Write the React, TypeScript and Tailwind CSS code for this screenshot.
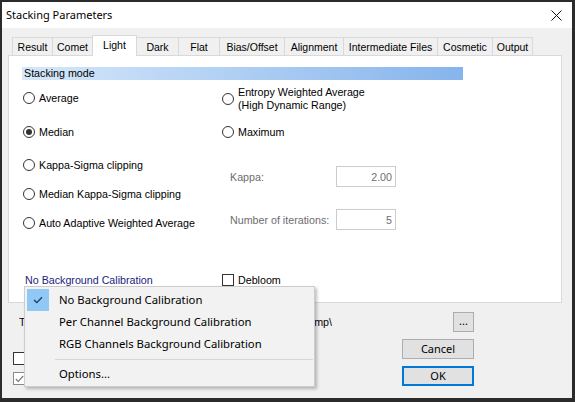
import React from "react";

const ui = "font-['Liberation_Sans',Arial,sans-serif] text-[10.7px] leading-[14px] text-black";
const seg = "font-['Noto_Sans',sans-serif]";

function Radio({ checked, label }: { checked?: boolean; label: React.ReactNode }) {
  return (
    <div className="flex items-center gap-[4px] h-[14px]">
      <span className="w-[12px] h-[12px] rounded-full border border-[#333333] bg-white flex items-center justify-center shrink-0">
        {checked && <span className="w-[6px] h-[6px] rounded-full bg-[#333333]" />}
      </span>
      <span>{label}</span>
    </div>
  );
}

const tabs: { name: string; cls: string }[] = [
  { name: "Result", cls: "w-[40px] border-l" },
  { name: "Comet", cls: "w-[40px] border-l" },
  { name: "Light", cls: "w-[45px] border-l border-r" },
  { name: "Dark", cls: "w-[41px]" },
  { name: "Flat", cls: "w-[41px] border-l" },
  { name: "Bias/Offset", cls: "w-[65px] border-l" },
  { name: "Alignment", cls: "w-[59px] border-l" },
  { name: "Intermediate Files", cls: "w-[94px] border-l" },
  { name: "Cosmetic", cls: "w-[55px] border-l" },
  { name: "Output", cls: "w-[41px] border-l border-r" },
];

export default function App() {
  return (
    <div className="w-[575px] h-[402px] bg-[#2b2b2b] pt-[2px] pl-[2px] overflow-hidden">
      <div className={`w-[570px] h-[396px] bg-[#f0f0f0] flex flex-col ${ui}`}>
        {/* Title bar */}
        <div className="h-[26px] bg-white flex items-center justify-between pl-[4px] pr-[10px] shrink-0">
          <span className={`${seg} text-[11px] text-black`}>Stacking Parameters</span>
          <svg width="11" height="11" viewBox="0 0 11 11" className="mt-[1px]">
            <path d="M0.5 0.5 L10.5 10.5 M10.5 0.5 L0.5 10.5" stroke="#111" strokeWidth="1" />
          </svg>
        </div>

        {/* Body */}
        <div className="relative flex-1 pt-[7px]">
          {/* Tab strip */}
          <div className="relative z-10 flex items-end h-[20px] ml-[10px] text-[10.5px] whitespace-nowrap">
            {tabs.map((t) =>
              t.name === "Light" ? (
                <div
                  key={t.name}
                  className={`${t.cls} h-[21px] -mb-px bg-white border-t border-[#d9d9d9] flex items-start justify-center pt-[2px] shrink-0`}
                >
                  {t.name}
                </div>
              ) : (
                <div
                  key={t.name}
                  className={`${t.cls} h-[18px] bg-[#f0f0f0] border-t border-[#d9d9d9] flex items-center justify-center shrink-0`}
                >
                  {t.name}
                </div>
              )
            )}
          </div>

          {/* Panel */}
          <div className="ml-[6px] w-[554px] h-[248px] bg-white border border-[#d9d9d9] flex flex-col">
            <div className="ml-[13px] mt-[11px] w-[441px] h-[13px] bg-gradient-to-r from-[#d6e8f9] to-[#86b4ec] pl-[2px] flex items-center leading-[13px]">
              Stacking mode
            </div>

            <div className="flex pl-[14px]">
              <div className="w-[199px] flex flex-col">
                <div className="mt-[11px]"><Radio label="Average" /></div>
                <div className="mt-[20px]"><Radio checked label="Median" /></div>
                <div className="mt-[19px]"><Radio label="Kappa-Sigma clipping" /></div>
                <div className="mt-[15px]"><Radio label="Median Kappa-Sigma clipping" /></div>
                <div className="mt-[15px]"><Radio label="Auto Adaptive Weighted Average" /></div>
              </div>
              <div className="flex flex-col">
                <div className="mt-[6px] h-[26px] flex items-center gap-[4px]">
                  <span className="w-[12px] h-[12px] rounded-full border border-[#333333] bg-white shrink-0" />
                  <span className="leading-[13px]">
                    Entropy Weighted Average
                    <br />
                    (High Dynamic Range)
                  </span>
                </div>
                <div className="mt-[13px]"><Radio label="Maximum" /></div>
                <div className="mt-[27px] h-[21px] flex items-center pl-[8px]">
                  <span className="w-[106px] text-[#6d6d6d]">Kappa:</span>
                  <span className="w-[60px] h-[21px] border border-[#cccccc] flex items-center justify-end pr-[3px] text-[#6d6d6d]">
                    2.00
                  </span>
                </div>
                <div className="mt-[22px] h-[21px] flex items-center pl-[8px]">
                  <span className="w-[106px] text-[#6d6d6d]">Number of iterations:</span>
                  <span className="w-[60px] h-[21px] border border-[#cccccc] flex items-center justify-end pr-[3px] text-[#6d6d6d]">
                    5
                  </span>
                </div>
              </div>
            </div>

            <div className="flex pl-[14px] mt-[43px] h-[14px] items-center">
              <div className="w-[199px] pl-[2px] text-[#1a237e]">No Background Calibration</div>
              <div className="flex items-center gap-[4px]">
                <span className="w-[12px] h-[12px] border border-[#333333] bg-white" />
                <span>Debloom</span>
              </div>
            </div>
          </div>

          {/* Bottom area */}
          <div className="pt-[9px] pl-[17px] pr-[98px]">
            <div className="flex items-center h-[20px]">
              <div className="w-[313px] flex justify-between whitespace-nowrap overflow-hidden">
                <span>Temporary files folder:</span>
                <span>C:\Users\Temp\</span>
              </div>
              <div className={`ml-auto w-[21px] h-[20px] bg-[#e1e1e1] border border-[#adadad] flex items-center justify-center ${seg} text-[11px] leading-none pb-[3px]`}>
                ...
              </div>
            </div>
            <div className="flex mt-[7px]">
              <div className="flex flex-col ml-[-6px]">
                <div className="mt-[13px] flex items-center gap-[4px] h-[13px]">
                  <span className="w-[13px] h-[13px] border border-[#333333] bg-white" />
                  <span>Reduce worker threads priority</span>
                </div>
                <div className="mt-[7px] flex items-center gap-[4px] h-[13px]">
                  <span className="w-[13px] h-[13px] border border-[#8a8a8a] bg-white flex items-center justify-center">
                    <svg width="9" height="8" viewBox="0 0 9 8">
                      <path d="M0.8 4 L3.3 6.5 L8.2 1" stroke="#7a7a7a" strokeWidth="1.2" fill="none" />
                    </svg>
                  </span>
                  <span>Use all available processors</span>
                </div>
              </div>
              <div className="ml-auto flex flex-col gap-[7px]">
                <div className={`w-[72px] h-[20px] bg-[#e1e1e1] border border-[#adadad] flex items-center justify-center ${seg} text-[11px]`}>
                  Cancel
                </div>
                <div className={`w-[72px] h-[20px] bg-[#e1e1e1] border-2 border-[#0078d7] flex items-center justify-center ${seg} text-[11px]`}>
                  OK
                </div>
              </div>
            </div>
          </div>

          {/* Popup menu */}
          <div className={`absolute left-[22px] top-[258px] w-[291px] h-[101px] bg-[#f2f2f2] border border-[#cccccc] shadow-[2px_2px_3px_rgba(0,0,0,0.25)] pt-[2px] pl-[2px] pr-[1px] ${seg} text-[11.3px] text-black z-20`}>
            <div className="flex items-center h-[22px]">
              <span className="w-[22px] h-[22px] bg-[#90c8f6] flex items-center justify-center">
                <svg width="10" height="8" viewBox="0 0 10 8">
                  <path d="M1 4 L3.8 6.6 L9 1.2" stroke="#1f3b66" strokeWidth="1.3" fill="none" />
                </svg>
              </span>
              <span className="ml-[10px]">No Background Calibration</span>
            </div>
            <div className="flex items-center h-[22px] pl-[32px]">Per Channel Background Calibration</div>
            <div className="flex items-center h-[22px] pl-[32px]">RGB Channels Background Calibration</div>
            <div className="h-[8px] pt-[4px] pl-[28px]">
              <div className="h-px bg-[#d7d7d7]" />
            </div>
            <div className="flex items-center h-[22px] pl-[32px]">Options...</div>
          </div>
        </div>
      </div>
    </div>
  );
}
